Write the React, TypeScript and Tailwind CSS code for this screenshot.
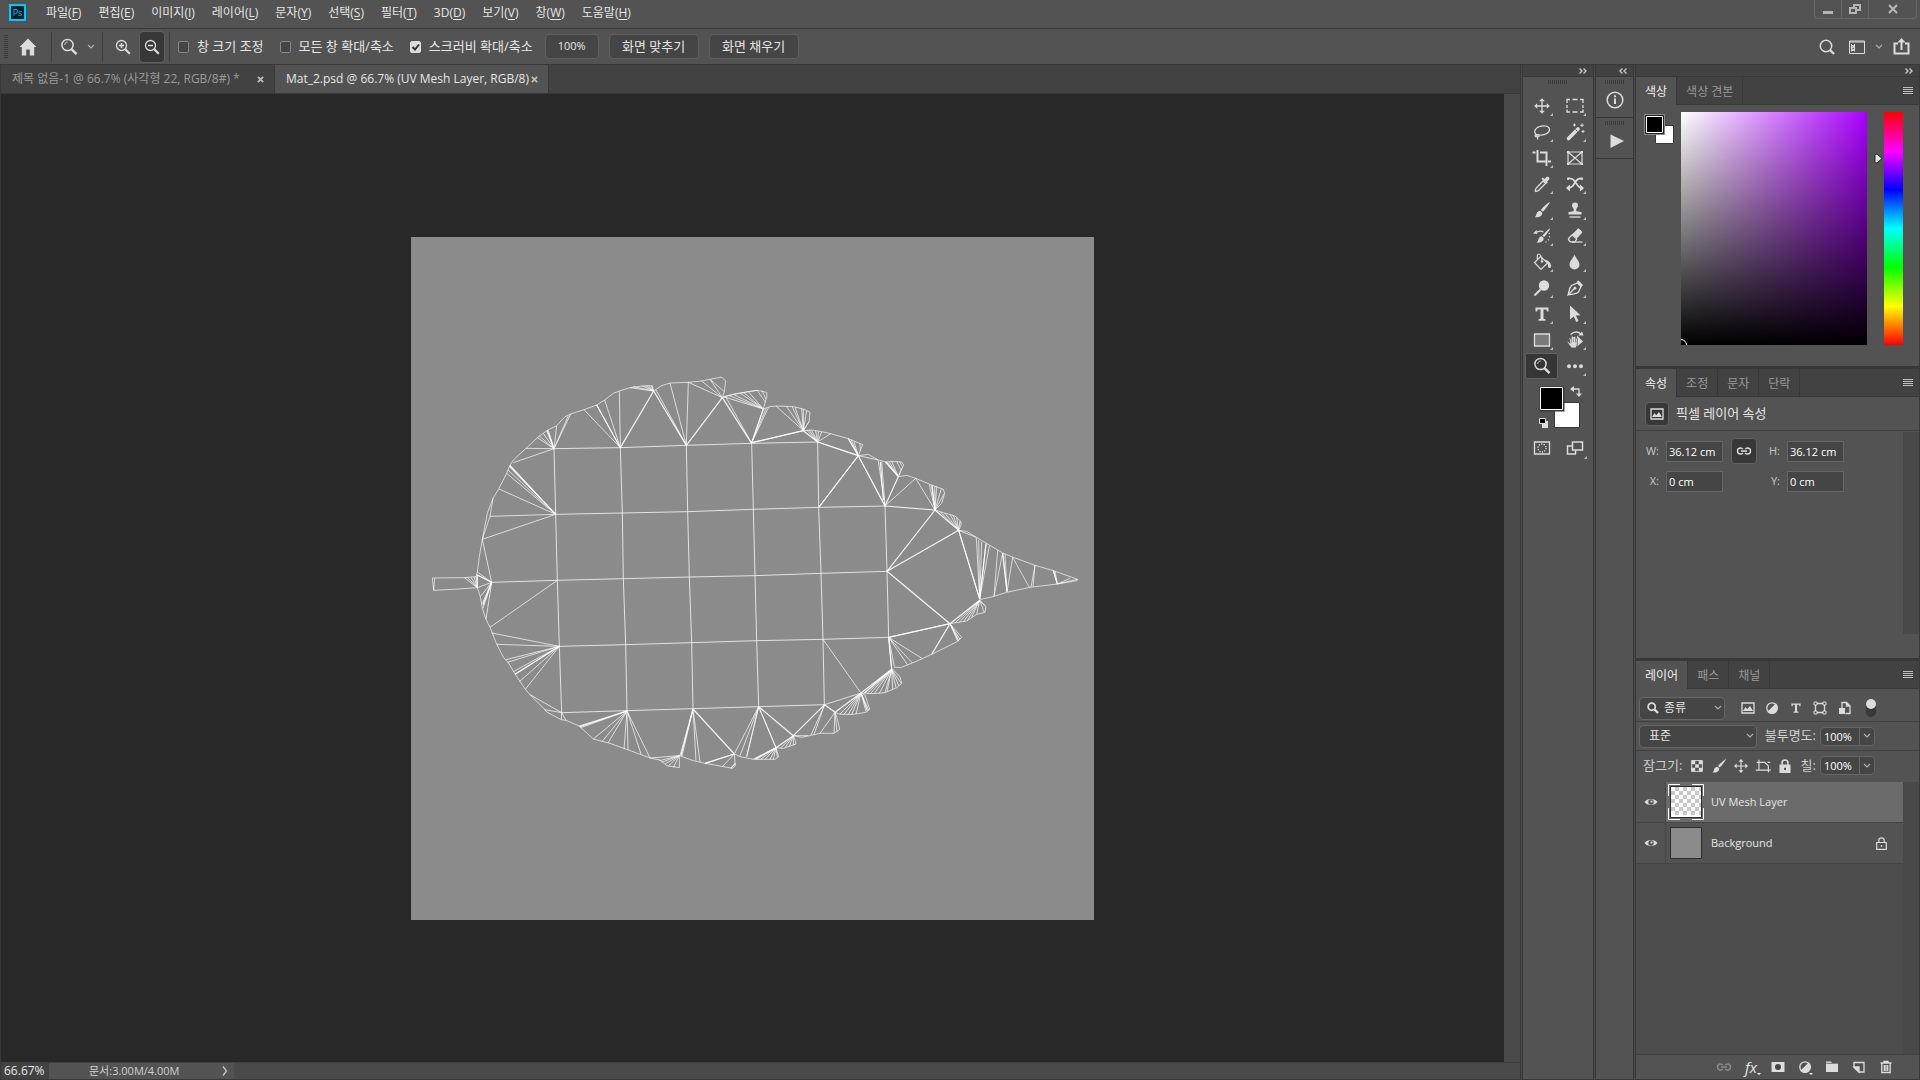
import { useState } from "react";
import type { ReactNode } from "react";
import clsx from "clsx";

type Point = [number, number];
type Fan = { hub: Point; to: Point[] };

const menus = [
  { label: "파일", key: "F" },
  { label: "편집", key: "E" },
  { label: "이미지", key: "I" },
  { label: "레이어", key: "L" },
  { label: "문자", key: "Y" },
  { label: "선택", key: "S" },
  { label: "필터", key: "T" },
  { label: "3D", key: "D" },
  { label: "보기", key: "V" },
  { label: "창", key: "W" },
  { label: "도움말", key: "H" },
];

/* ---------- Icons ---------- */

const Icon = ({ children, className = "w-5 h-5" }: { children: ReactNode; className?: string }) => (
  <svg viewBox="0 0 20 20" className={clsx("shrink-0", className)} fill="none" stroke="#dcdcdc" strokeWidth="1.3">
    {children}
  </svg>
);

const Chevron = () => (
  <svg viewBox="0 0 8 6" className="w-2 h-1.5 shrink-0" fill="none" stroke="#b0b0b0" strokeWidth="1.2">
    <path d="M1 1l3 3 3-3" />
  </svg>
);

const MoveIcon = ({ className }: { className?: string }) => (
  <Icon className={className}>
    <path d="M10 4v12M4 10h12" />
    <path d="M10 2.2l2.8 3H7.2zM10 17.8l2.8-3H7.2zM2.2 10l3-2.8v5.6zM17.8 10l-3-2.8v5.6z" fill="#dcdcdc" stroke="none" />
  </Icon>
);

const BrushIcon = ({ className }: { className?: string }) => (
  <Icon className={className}>
    <path d="M17.6 2.4c.5.5-4.600 7.200-6.800 9.400L8.900 9.900C11 7.400 17 1.900 17.600 2.400z" fill="#dcdcdc" stroke="none" />
    <path d="M8.200 10.700l2 2c.3 3-2.700 5-7.700 4.600 1.700-.9 1.500-2.200 2.200-4 .7-1.600 2-2.600 3.500-2.600z" fill="#dcdcdc" stroke="none" />
  </Icon>
);

const ZoomIcon = ({ className }: { className?: string }) => (
  <Icon className={className}>
    <circle cx="8.500" cy="8" r="5.600" strokeWidth="1.500" />
    <path d="M5.700 7.800c.2-1.700 1.300-2.700 3-2.800" strokeWidth="1" />
    <path d="M12.500 12.200l5 5" strokeWidth="2.400" />
  </Icon>
);

const HalfCircleIcon = () => (
  <Icon>
    <circle cx="10" cy="10" r="5.200" />
    <path d="M13.700 6.300A5.200 5.200 0 016.300 13.700z" fill="#dcdcdc" />
  </Icon>
);

const TypeIcon = ({ className }: { className?: string }) => (
  <Icon className={className}>
    <path d="M3.500 3.500h13v4h-1.600l-.5-2h-2.900v9.300l2 .5v1.400h-7v-1.400l2-.5V5.500H5.600l-.5 2H3.500z" fill="#dcdcdc" stroke="none" />
  </Icon>
);

const ImageIcon = ({ className }: { className?: string }) => (
  <Icon className={className}>
    <path d="M4 5h12v10H4z" />
    <path d="M5 13l2.500-4 1.700 2.200L12 8l3 5z" fill="#dcdcdc" stroke="none" />
  </Icon>
);

const LinkIcon = ({ dim }: { dim?: boolean }) => (
  <svg viewBox="0 0 16 10" className="w-4 h-2.5" fill="none" stroke={dim ? "#8a8a8a" : "#dcdcdc"} strokeWidth="1.400">
    <path d="M6.800 3.200C6 2 5.300 2 4.500 2a3 3 0 000 6c1 0 1.800-.3 2.300-1.200M9.200 3.200C10 2 10.700 2 11.500 2a3 3 0 010 6c-1 0-1.800-.3-2.300-1.200M5 5h6" />
  </svg>
);

const Grip = () => (
  <svg viewBox="0 0 20 4" className="w-5 h-1 shrink-0" stroke="#3c3c3c">
    <path d="M.5 0v4M2.500 0v4M4.500 0v4M6.500 0v4M8.500 0v4M10.500 0v4M12.500 0v4M14.500 0v4M16.500 0v4M18.500 0v4" />
  </svg>
);

const DoubleArrow = ({ left }: { left?: boolean }) => (
  <svg viewBox="0 0 8 6" className="w-2 h-1.5" fill="none" stroke="#c8c8c8" strokeWidth="1.400">
    <path d={left ? "M3.500.5L1 3l2.500 2.500M7.500.5L5 3l2.500 2.500" : "M.5.500L3 3 .5 5.500M4.500.500L7 3 4.500 5.500"} />
  </svg>
);

const tools: { name: string; icon: ReactNode; more?: boolean }[] = [
  { name: "이동 도구", more: true, icon: <MoveIcon /> },
  {
    name: "사각형 선택 윤곽 도구",
    more: true,
    icon: (
      <Icon>
        <path d="M2 7V3.500h3M7.500 3.500h5M15 3.500h3V7M18 9v3M18 13.500V16h-3M12.500 16h-5M5 16H2v-2.500M2 12V9" />
      </Icon>
    ),
  },
  {
    name: "올가미 도구",
    more: true,
    icon: (
      <Icon>
        <path d="M5.500 13.200C1 11 2.500 6.500 7 4.700c4.500-1.700 10-1 10.500 2.300.5 3.600-4.500 6.300-9.300 6-3-.1-5-.6-5.200.6-.1 1.600 3.500 2 4.200.5.500-1.300-1.700-2.300-2.200-.9-.4 1.300 1.200 2.300.5 4.300" strokeWidth="1.200" />
      </Icon>
    ),
  },
  {
    name: "자동 선택 도구",
    more: true,
    icon: (
      <Icon>
        <path d="M3.500 16.500L13 7" strokeWidth="3.600" strokeLinecap="round" />
        <path d="M10.500 7.500l2 2" stroke="#535353" strokeWidth="1" />
        <path d="M9.500 1.500v3M8 3h3M17 1.500v3.500M15.200 3.200h3.600M18 8v3M16.500 9.500h3" strokeWidth="1" />
      </Icon>
    ),
  },
  {
    name: "자르기 도구",
    more: true,
    icon: (
      <Icon>
        <path d="M.500 4.500h3M5.500 2v11.500h9M8 4.500h6.500V18M16 13.500h3" strokeWidth="2" />
      </Icon>
    ),
  },
  {
    name: "프레임 도구",
    icon: (
      <Icon>
        <path d="M3 4h14v12H3zM3 4l14 12M17 4L3 16" strokeWidth="1.200" />
        <path d="M2 3h2v2H2zM16 3h2v2h-2zM2 15h2v2H2zM16 15h2v2h-2z" fill="#dcdcdc" stroke="none" />
      </Icon>
    ),
  },
  {
    name: "스포이드 도구",
    more: true,
    icon: (
      <Icon>
        <path d="M11 7l2.500 2.500-7 7c-1 .8-2 .3-3 1-1-1 .2-2 .8-3.500z" />
        <path d="M12.500 5l2-2c1.500-1.200 3.900 1 2.600 2.600l-2 2 .8.900-1.400 1.300-5-5 1.400-1.300z" fill="#dcdcdc" stroke="none" />
      </Icon>
    ),
  },
  {
    name: "내용 인식 이동 도구",
    more: true,
    icon: (
      <Icon>
        <path d="M3 6V4.500c5-1 6 2 8 4.500 2 3 3 5.500 7 5.500M17 6V4.500c-4-.5-5.500 1.500-7 4-2 3.500-3 5.500-8 5.500" strokeWidth="1.800" />
        <path d="M1 14l4-3.500v7zM19 14l-4-3.500v7z" fill="#dcdcdc" stroke="none" />
      </Icon>
    ),
  },
  { name: "브러시 도구", more: true, icon: <BrushIcon /> },
  {
    name: "복제 도장 도구",
    more: true,
    icon: (
      <Icon>
        <path d="M8.700 9.500C8.700 8 7 7.500 7 5.500a3 3 0 116 0c0 2-1.700 2.500-1.700 4v1.700l5.200.8v2.500h-13V12l5.200-.8z" fill="#dcdcdc" stroke="none" />
        <path d="M4.500 17h11" />
      </Icon>
    ),
  },
  {
    name: "작업 내역 브러시 도구",
    more: true,
    icon: (
      <Icon>
        <path d="M18 2.500c.5.500-4 6.800-6 8.800l-1.700-1.700c2-2.200 7-7.600 7.700-7.100zM9.700 10.200l1.900 1.900c.3 3-2.300 5-7.100 4.600 1.500-.9 1.300-2.200 2-3.800.6-1.500 1.800-2.700 3.200-2.700zM1 7.500L4.500 4l.8 4z" fill="#dcdcdc" stroke="none" />
        <path d="M4 6.500c3-2 5-2 7.500-.5" />
        <path d="M17 7c1 2 .8 4.500-.5 6.500s-3 3-4.500 3.500" strokeDasharray="1.200 2" strokeWidth="1.200" />
      </Icon>
    ),
  },
  {
    name: "지우개 도구",
    more: true,
    icon: (
      <Icon>
        <path d="M3.500 12.500l3.800-3.800 4.400 4.400-2 2.900H6c-1.500-.5-2.500-1.800-2.500-3.500z" />
        <path d="M7 8.500l5.500-5.500c.6-.6 1.300-.5 2 0l2.200 2.200c.6.600.6 1.400 0 2l-5.200 5.600z" fill="#dcdcdc" stroke="none" />
        <path d="M7 16h10.500" />
      </Icon>
    ),
  },
  {
    name: "페인트 통 도구",
    more: true,
    icon: (
      <Icon>
        <path d="M8.500 4.500l7 6.500-6.500 6.500-6.500-7zM5.500 7.500c-.5-3-.2-5.500 1.200-5.500 1.800 0 2.800 3 3.300 6.500" strokeWidth="1.200" />
        <circle cx="10" cy="9.500" r="1.200" fill="#dcdcdc" stroke="none" />
        <path d="M12.500 7.500c3.500.5 6 2.500 6.500 6 0 2-.5 2.500-1.500 2.500s-1.500-1-1.500-2.300C15.700 11.500 14.500 9.500 12.500 7.500z" fill="#dcdcdc" stroke="none" />
      </Icon>
    ),
  },
  {
    name: "흐림 효과 도구",
    more: true,
    icon: (
      <Icon>
        <path d="M9.500 2.500c1 3.300 5 6.500 5 10a5 5 0 01-10 0c0-3.500 4-6.700 5-10z" fill="#dcdcdc" stroke="none" />
      </Icon>
    ),
  },
  {
    name: "닷지 도구",
    more: true,
    icon: (
      <Icon>
        <circle cx="12" cy="7.500" r="5.200" fill="#dcdcdc" stroke="none" />
        <path d="M8.500 11.500L2.500 17.500" strokeWidth="2" />
      </Icon>
    ),
  },
  {
    name: "펜 도구",
    more: true,
    icon: (
      <Icon>
        <path d="M3 17c1-3 1-7 3.500-9.500l6-2.500 3.500 3.500-2.500 5.500C11 16.500 6.500 16 3 17zM3 17l6.500-6.500" />
        <circle cx="10" cy="10.200" r="1.400" fill="#dcdcdc" stroke="none" />
        <path d="M11.500 4l2-1.500L18 7l-1.500 2z" fill="#dcdcdc" stroke="none" />
      </Icon>
    ),
  },
  { name: "수평 문자 도구", more: true, icon: <TypeIcon /> },
  {
    name: "패스 선택 도구",
    more: true,
    icon: (
      <Icon>
        <path d="M5 1.500l10.500 9.700-4.600.3 2.600 5.600-2.200 1-2.500-5.600L5 15.500z" fill="#dcdcdc" stroke="none" />
      </Icon>
    ),
  },
  {
    name: "사각형 도구",
    more: true,
    icon: (
      <Icon>
        <path d="M2.500 4h15v12h-15z" fill="#7a7a7a" />
      </Icon>
    ),
  },
  {
    name: "회전 보기 도구",
    more: true,
    icon: (
      <Icon>
        <path d="M5.500 4.500C9 1.500 13 1.500 16 4" />
        <path d="M18.500 5.500h-5l3.500-4z" fill="#dcdcdc" stroke="none" />
        <path d="M12 5.500l6 6-6 5z" fill="#dcdcdc" stroke="none" />
        <path d="M6.500 18c-1.500-2-3-3.700-4.500-6 .8-.8 2 0 3 1.200L4 8c.9-.6 1.500 0 2 1.200L6.500 6c.9-.4 1.600 0 1.800 1l.6 0c.3-.9 1.500-.9 1.800 0v1.500c1-.6 1.700 0 1.700.8-.2 3.500.3 6-1.400 8.700z" fill="#dcdcdc" stroke="#535353" strokeWidth=".8" />
        <path d="M6.400 9v3.500M8.500 8.500V12M10.600 9v3.500" stroke="#6b6b6b" strokeWidth=".7" />
      </Icon>
    ),
  },
  { name: "돋보기 도구", icon: <ZoomIcon /> },
  {
    name: "도구 모음 편집",
    more: true,
    icon: (
      <Icon>
        <path d="M4 8.200a2 2 0 100 4 2 2 0 000-4zM10 8.200a2 2 0 100 4 2 2 0 000-4zM16 8.200a2 2 0 100 4 2 2 0 000-4z" fill="#dcdcdc" stroke="none" />
      </Icon>
    ),
  },
];

/* ---------- UV mesh ---------- */

const gridRows: Point[][] = [
  [[462, 266], [661, 263], [859, 256], [1055, 250], [1253, 246]],
  [[467, 463], [667, 459], [863, 455], [1060, 448], [1256, 442], [1455, 438]],
  [[275, 667], [472, 661], [670, 656], [868, 651], [1065, 647], [1263, 640], [1461, 634]],
  [[478, 859], [677, 854], [875, 848], [1070, 842], [1269, 838], [1466, 832]],
  [[485, 1058], [681, 1052], [879, 1046], [1076, 1040], [1273, 1034]],
];

const gridColumns: Point[][] = [
  [[462, 266], [467, 463], [472, 661], [478, 859], [485, 1058]],
  [[661, 263], [667, 459], [670, 656], [677, 854], [681, 1052]],
  [[859, 256], [863, 455], [868, 651], [875, 848], [879, 1046]],
  [[1055, 250], [1060, 448], [1065, 647], [1070, 842], [1076, 1040]],
  [[1253, 246], [1256, 442], [1263, 640], [1269, 838], [1273, 1034]],
  [[1455, 438], [1461, 634], [1466, 832]],
];

type Quadrant = { shift: string; outline: string; fans: Fan[]; bold: string };

const quadrants: Quadrant[] = [
  {
    shift: "translate(0 0)",
    outline:
      "M232 683L160 688 101 691 97 654 193 653 228 650 232 636 238 590 247 538 262 460 279 415 297 385 320 340 330 315 340 300 378 265 412 233 442 211 470 197 495 170 512 162 552 149 590 135 614 120 640 100 658 93 690 83 727 78 757 77 761 93 785 77 810 69 865 67 905 63 930 58 965 51 977 63 973 95 967 113 1000 103 1045 95 1072 91M104 654L101 691M247 538L270 469 279 415M930 58L973 95",
    fans: [
      { hub: [462, 266], to: [[378, 265], [412, 233], [418, 228], [430, 220], [440, 212], [445, 211], [470, 198], [505, 167], [512, 162], [340, 308]] },
      { hub: [467, 463], to: [[330, 315], [328, 320], [324, 330], [320, 340], [297, 387], [270, 469], [247, 538]] },
      { hub: [661, 263], to: [[552, 149], [590, 135], [614, 120], [658, 93]] },
      { hub: [761, 93], to: [[690, 83], [700, 80], [727, 78], [737, 77], [745, 77], [753, 77]] },
      { hub: [859, 256], to: [[768, 90], [810, 69], [865, 67]] },
      { hub: [967, 113], to: [[865, 67], [905, 63], [930, 58]] },
      { hub: [1055, 250], to: [[977, 110], [1090, 147]] },
      { hub: [275, 667], to: [[247, 538], [232, 636], [232, 645], [232, 683], [241, 710], [247, 730], [249, 745], [258, 778]] },
      { hub: [232, 683], to: [[193, 653], [203, 653], [213, 652], [222, 651], [228, 648]] },
      { hub: [472, 661], to: [[270, 802]] },
    ],
    bold: "M661 263L761 93 859 256 967 113 1055 250M661 263L590 135M462 266L442 211M467 463L330 318M232 645V683M232 645L275 667 249 735",
  },
  {
    shift: "translate(1020 0)",
    outline:
      "M-50 110L-20 103 25 95 52 91 80 97 81 108 70 147 90 140 108 138 160 140 190 147 210 157 207 185 190 212 215 210 245 215 272 221 325 236 368 254 355 287 385 283 415 300 440 306 455 304 485 306 491 315 475 350 500 346 527 355 570 373 610 388 614 400 605 430 585 450 610 458 645 468 663 485 663 495 656 511 680 514 709 532 748 555 788 579 820 592 885 616 940 632 1013 658 1010 662 952 672 870 682 800 697 762 709 719 719M773 572L762 709 788 579 801 695 818 592 868 682M795 582L801 695M885 616L873 682M885 616L879 681M52 91L75 125M66 92L78 117M360 251L361 272M470 304L482 328M478 305L487 320",
    fans: [
      { hub: [70, 147], to: [[-50, 110], [-35, 106], [-20, 103], [0, 99], [10, 97], [25, 95]] },
      { hub: [190, 212], to: [[108, 138], [140, 140], [157, 141], [165, 142], [185, 146], [190, 147], [200, 152], [207, 185]] },
      { hub: [35, 248], to: [[85, 143], [78, 146], [190, 212]] },
      { hub: [233, 246], to: [[200, 210], [207, 210], [215, 211], [227, 213], [235, 214], [245, 216], [272, 221], [355, 287]] },
      { hub: [355, 287], to: [[325, 236], [333, 238], [342, 245], [415, 300], [238, 440], [435, 438]] },
      { hub: [435, 438], to: [[415, 303], [425, 305], [527, 355]] },
      { hub: [475, 350], to: [[435, 306], [441, 306], [448, 306], [455, 304], [485, 325]] },
      { hub: [585, 450], to: [[527, 355], [568, 373], [575, 375], [584, 378], [590, 380], [604, 386], [612, 402]] },
      { hub: [656, 511], to: [[600, 455], [615, 460], [630, 463], [640, 467], [650, 472], [660, 483], [709, 532]] },
      { hub: [719, 717], to: [[656, 511], [709, 534], [716, 540], [725, 545], [738, 550], [748, 557]] },
      { hub: [952, 672], to: [[940, 632], [945, 634], [990, 655], [1013, 658]] },
    ],
    bold: "M35 248L70 147M35 248L190 212 233 246 355 287 238 440M355 287L435 438 475 350M355 287L325 236M475 350L438 306M435 438L585 450 441 634 656 511 585 450M656 511L719 717M441 634L630 791M585 450L576 376M421 306L430 420M719 717L738 552M788 579L801 695M940 632L952 672",
  },
  {
    shift: "translate(0 600)",
    outline:
      "M232 83L241 110 247 145 258 178 270 202 289 250 310 292 325 308 344 340 376 388 390 404 433 447 440 456 484 479 498 481 537 498 545 505 580 537 630 550 680 568 750 594 780 600 800 617 838 623 838 587 880 602 915 610 998 625 1006 618 1003 582",
    fans: [
      { hub: [478, 259], to: [[275, 219], [289, 253], [318, 299], [322, 307], [340, 335], [345, 343], [358, 365], [376, 388]] },
      { hub: [485, 458], to: [[390, 404], [433, 449], [484, 479], [498, 481]] },
      { hub: [681, 453], to: [[537, 498], [542, 503], [580, 537], [606, 545], [624, 549], [672, 567], [684, 569], [723, 582], [750, 594]] },
      { hub: [838, 587], to: [[750, 594], [778, 602], [785, 607], [795, 612], [805, 618], [820, 622]] },
      { hub: [879, 447], to: [[840, 587], [846, 588], [888, 602], [900, 606]] },
      { hub: [1003, 582], to: [[915, 610], [967, 620]] },
      { hub: [1076, 440], to: [[1003, 582], [1020, 587], [1040, 592]] },
    ],
    bold: "M879 447L1003 582M879 447L843 587M681 453L540 500M478 259L345 343M1003 582L915 610M1006 610L992 625",
  },
  {
    shift: "translate(1020 600)",
    outline:
      "M630 191L680 183 710 163 735 157 738 140 719 121M463 322L485 322 517 309 547 296 575 283 653 244 665 232 640 203 630 191M363 399L400 401 435 398 470 383 485 370 480 350 455 325M285 457L300 463 340 463 378 457 389 448 375 405 363 399M160 527L185 532 213 526 240 520 282 520 299 508 293 480 285 457M108 563L130 565 168 552 165 540 160 527M-16 582L0 590 40 598 105 598 116 590 108 563",
    fans: [
      { hub: [719, 121], to: [[645, 189], [658, 187], [670, 185], [682, 182], [695, 172], [710, 163], [733, 157], [735, 137]] },
      { hub: [630, 191], to: [[653, 244], [660, 238], [446, 232]] },
      { hub: [446, 232], to: [[455, 325], [463, 320], [503, 315], [517, 309], [547, 296]] },
      { hub: [455, 328], to: [[372, 399], [382, 400], [392, 400], [403, 400], [418, 400], [435, 398], [441, 395], [458, 387], [468, 383], [477, 378], [484, 370]] },
      { hub: [363, 399], to: [[249, 238], [254, 434], [300, 462], [312, 463], [325, 463], [335, 463], [348, 462], [378, 455], [386, 450]] },
      { hub: [254, 434], to: [[213, 525], [222, 523]] },
      { hub: [285, 457], to: [[240, 520], [282, 520], [291, 515]] },
      { hub: [160, 527], to: [[122, 564], [135, 563], [148, 560], [160, 556], [204, 527]] },
      { hub: [108, 563], to: [[40, 597], [50, 598], [62, 598], [75, 598], [90, 598], [100, 598], [112, 592]] },
      { hub: [56, 440], to: [[20, 588]] },
    ],
    bold: "M446 232L630 191 719 121M630 191L575 283M630 191L656 242M446 232L455 328 363 399 285 457 254 434M254 434L160 527 108 563 56 440 160 527M363 399L382 452M108 563L45 597M455 328L375 398",
  },
];

const line = (points: Point[]) => "M" + points.map((p) => p.join(" ")).join("L");
const fanPath = ({ hub, to }: Fan) => to.map((p) => line([hub, p])).join("");

const UvMesh = () => (
  <svg viewBox="33 -369 2049 2049" className="w-[683px] h-[683px] bg-[#8b8b8b] shrink-0" fill="none" stroke="#fff" strokeLinejoin="round">
    <g strokeWidth="3" strokeOpacity=".75">
      {[...gridRows, ...gridColumns].map((points, i) => (
        <path key={i} d={line(points)} />
      ))}
    </g>
    {quadrants.map((q) => (
      <g key={q.shift} transform={q.shift}>
        <path d={q.outline} strokeWidth="3" strokeOpacity=".65" />
        <path d={q.fans.map(fanPath).join("")} strokeWidth="2.800" strokeOpacity=".75" />
        <path d={q.bold} strokeWidth="3.600" strokeOpacity=".9" />
      </g>
    ))}
  </svg>
);

/* ---------- Bars ---------- */

const MenuBar = () => (
  <header className="h-[29px] flex items-center bg-[#535353] border-b border-[#383838] pl-[9px] pr-[3px]">
    <div className="w-[17px] h-[17px] mb-1 border-2 border-[#00c8ff] bg-[#001d26] text-[#00c8ff] text-[9px] leading-none flex items-center justify-center">Ps</div>
    <nav className="flex items-center gap-[17px] ml-5 mb-0.5 flex-1">
      {menus.map((menu) => (
        <button key={menu.key} className="text-[12px] leading-4 whitespace-nowrap">
          {menu.label}(<span className="underline underline-offset-2">{menu.key}</span>)
        </button>
      ))}
    </nav>
    <div className="self-start h-[19px] flex border border-t-0 border-[#666] rounded-b-sm">
      <button aria-label="최소화" className="w-[27px] flex items-center justify-center border-r border-[#666]">
        <span className="w-2.5 h-[3px] mt-1.5 bg-[#b4b4b4]" />
      </button>
      <button aria-label="이전 크기로" className="w-[27px] flex items-center justify-center border-r border-[#666]">
        <svg viewBox="0 0 12 10" className="w-3 h-2.5" fill="none" stroke="#b4b4b4" strokeWidth="2">
          <path d="M5 3V1h6v5H8M1 4h6v5H1z" />
        </svg>
      </button>
      <button aria-label="닫기" className="w-[47px] flex items-center justify-center">
        <svg viewBox="0 0 10 10" className="w-2.5 h-2.5" stroke="#b4b4b4" strokeWidth="2.200">
          <path d="M1 1l8 8M9 1L1 9" />
        </svg>
      </button>
    </div>
  </header>
);

const Check = ({ label, checked }: { label: string; checked?: boolean }) => (
  <label className="relative flex items-center gap-2 whitespace-nowrap">
    <input
      type="checkbox"
      defaultChecked={checked}
      className="peer appearance-none w-[11px] h-[12px] rounded-xs border border-[#888] bg-[#454545] checked:bg-[#dcdcdc] checked:border-[#dcdcdc]"
    />
    <svg viewBox="0 0 11 12" className="absolute left-0 w-[11px] h-3 hidden peer-checked:block" fill="none" stroke="#333" strokeWidth="2">
      <path d="M2.500 6l2.500 2.500L9 3.500" />
    </svg>
    {label}
  </label>
);

const Divider = () => <div className="w-px h-[30px] bg-[#3e3e3e]" />;

const OptionsBar = () => (
  <div className="h-9 flex items-center bg-[#535353] border-b border-[#383838] pl-1 pr-2.5 text-[13px]">
    <svg viewBox="0 0 4 24" className="w-1 h-6" stroke="#3c3c3c">
      <path d="M2 0v24" strokeWidth="4" strokeDasharray="1 1" />
    </svg>
    <button aria-label="홈" className="ml-[11px] mr-3.5">
      <svg viewBox="0 0 18 18" className="w-[18px] h-[18px]" fill="#dcdcdc">
        <path d="M9 .500L17.500 9h-2.300v8.500h-4.400v-6H7.200v6H2.800V9H.500z" />
      </svg>
    </button>
    <Divider />
    <button aria-label="돋보기" className="flex items-center gap-2 px-[7px]">
      <ZoomIcon />
      <Chevron />
    </button>
    <Divider />
    <button aria-label="확대" className="w-9 h-8 flex items-center justify-center pl-1">
      <Icon>
        <circle cx="8.500" cy="8.500" r="5" />
        <path d="M12.300 12.300l4.500 4.500" strokeWidth="2.200" />
        <path d="M6 8.500h5M8.500 6v5" strokeWidth="1.500" />
      </Icon>
    </button>
    <button aria-label="축소" className="w-[26px] h-8 flex items-center justify-center bg-[#383838] border border-[#5e5e5e] rounded-sm">
      <Icon>
        <circle cx="8.500" cy="8.500" r="5" />
        <path d="M12.300 12.300l4.500 4.500" strokeWidth="2.200" />
        <path d="M6 8.500h5" strokeWidth="1.500" />
      </Icon>
    </button>
    <div className="ml-1">
      <Divider />
    </div>
    <div className="flex items-center gap-4 ml-2">
      <Check label="창 크기 조정" />
      <Check label="모든 창 확대/축소" />
      <Check label="스크러비 확대/축소" checked />
    </div>
    <div className="flex items-center gap-2.5 ml-3">
      <button className="w-[54px] h-[25px] bg-[#454545] border border-[#606060] rounded-sm text-[11px]">100%</button>
      <button className="w-[90px] h-[25px] bg-[#454545] border border-[#606060] rounded-sm">화면 맞추기</button>
      <button className="w-[90px] h-[25px] bg-[#454545] border border-[#606060] rounded-sm">화면 채우기</button>
    </div>
    <div className="flex items-center ml-auto">
      <button aria-label="검색">
        <Icon className="w-5 h-5">
          <circle cx="9" cy="9" r="5.700" strokeWidth="1.500" />
          <path d="M13 13l4 4" strokeWidth="2.400" />
        </Icon>
      </button>
      <button aria-label="작업 영역" className="flex items-center gap-2.5 ml-3 mr-2.5">
        <svg viewBox="0 0 16 14" className="w-4 h-3.5" fill="none" stroke="#dcdcdc">
          <path d="M.5 1h15M.5 1v12.500h15V1M.5 2h15M3 5.500h1.500v2H3zM3 9h1.500v1.500H3zM2.500 4v7.500M5.500 4v7.500" />
        </svg>
        <Chevron />
      </button>
      <button aria-label="공유">
        <svg viewBox="0 0 17 17" className="w-[17px] h-[17px]" fill="none" stroke="#dcdcdc" strokeWidth="2">
          <path d="M5 5.500H1.500v10h14v-10H12M8.500 12V3" />
          <path d="M8.500 0l4 4.500h-8z" fill="#dcdcdc" stroke="none" />
        </svg>
      </button>
    </div>
  </div>
);

const CloseMark = () => (
  <svg viewBox="0 0 8 8" className="w-[7px] h-[7px]" stroke="#bdbdbd" strokeWidth="2">
    <path d="M1 1l6 6M7 1L1 7" />
  </svg>
);

const DocumentTabs = () => (
  <div className="h-[29px] flex bg-[#424242] border-b border-[#383838] text-[12px]">
    <div className="w-[274px] flex items-center justify-between pl-[11px] pr-2.5 border-r border-[#383838] text-[#9b9b9b]">
      <button className="whitespace-nowrap">제목 없음-1 @ 66.7% (사각형 22, RGB/8#) *</button>
      <button aria-label="탭 닫기"><CloseMark /></button>
    </div>
    <div className="w-[274px] flex items-center justify-between pl-[11px] pr-2.5 border-r border-[#383838] bg-[#535353]">
      <button className="whitespace-nowrap">Mat_2.psd @ 66.7% (UV Mesh Layer, RGB/8)</button>
      <button aria-label="탭 닫기"><CloseMark /></button>
    </div>
  </div>
);

const StatusBar = () => (
  <footer className="h-[17px] flex items-stretch bg-[#4a4a4a] border-t border-[#404040] text-[11px] leading-4">
    <div className="w-12 pl-[3px] bg-[#424242] text-[12px] leading-4">66.67%</div>
    <button className="w-[185px] flex items-center justify-between pl-10 pr-1.5 bg-[#535353] text-[#d0d0d0]">
      문서:3.00M/4.00M
      <svg viewBox="0 0 6 10" className="w-1.5 h-2.5" fill="none" stroke="#c8c8c8" strokeWidth="1.300">
        <path d="M1 .500l3.500 4.500L1 9.500" />
      </svg>
    </button>
  </footer>
);

/* ---------- Docks ---------- */

const ToolsPanel = () => {
  const [active, setActive] = useState("돋보기 도구");

  return (
    <aside className="w-[71px] shrink-0 flex flex-col border-r border-[#383838] bg-[#535353]">
      <div className="h-3 shrink-0 flex items-center justify-end pr-1.5 bg-[#424242] border-b border-[#383838]"><DoubleArrow /></div>
      <div className="flex justify-center pt-[3px] pb-[9px]"><Grip /></div>
      <div className="grid grid-cols-2 px-0.5">
        {tools.map((tool) => (
          <button
            key={tool.name}
            aria-label={tool.name}
            onClick={() => setActive(tool.name)}
            className={clsx(
              "relative h-[26px] flex items-center justify-center border rounded-xs",
              active === tool.name ? "bg-[#363636] border-[#626262]" : "border-transparent"
            )}
          >
            {tool.icon}
            {tool.more && (
              <svg viewBox="0 0 3 3" className="absolute right-1 bottom-0.5 w-[3px] h-[3px]" fill="#bdbdbd">
                <path d="M3 0v3H0z" />
              </svg>
            )}
          </button>
        ))}
      </div>
      <svg viewBox="0 0 44 43" className="w-11 h-[43px] ml-[15px] mt-[6px]">
        <path d="M16.500 17.500h25v25h-25z" fill="#fff" stroke="#383838" />
        <path d="M1.500 1.500h25v25h-25z" fill="#383838" />
        <path d="M2.500 2.500h22v22h-22z" fill="#000" stroke="#fff" />
        <path d="M4 36h6v7H4z" fill="#dcdcdc" />
        <path d="M1.500 33.500h6v5h-6z" fill="#000" stroke="#dcdcdc" />
        <path d="M34 4h7v6" fill="none" stroke="#dcdcdc" strokeWidth="1.300" />
        <path d="M32 4l4-3v6zM41 12l-3-3.500h6z" fill="#dcdcdc" />
      </svg>
      <div className="grid grid-cols-2 px-0.5 mt-[7px]">
        <button aria-label="빠른 마스크" className="h-[26px] flex items-center justify-center">
          <Icon>
            <path d="M2.500 4h15v12h-15z" />
            <circle cx="10" cy="10" r="4" strokeDasharray="1.200 1.300" />
          </Icon>
        </button>
        <button aria-label="화면 모드" className="relative h-[26px] flex items-center justify-center">
          <Icon>
            <path d="M7.500 4h10v8h-10zM7.500 8h-5v8h8v-4" strokeWidth="1.500" />
          </Icon>
          <svg viewBox="0 0 3 3" className="absolute right-1 bottom-0.5 w-[3px] h-[3px]" fill="#bdbdbd">
            <path d="M3 0v3H0z" />
          </svg>
        </button>
      </div>
    </aside>
  );
};

const IconDock = () => (
  <aside className="w-[39px] shrink-0 flex flex-col border-x border-[#383838] bg-[#535353]">
    <div className="h-3 shrink-0 flex items-center justify-end pr-1.5 bg-[#424242] border-b border-[#383838]"><DoubleArrow left /></div>
    <div className="h-[41px] flex flex-col items-center pt-[3px] border-b border-[#383838]">
      <Grip />
      <button aria-label="정보" className="mt-1.5">
        <Icon>
          <circle cx="10" cy="10" r="7.800" strokeWidth="1.500" />
          <path d="M10 8.500V14M10 5.300v2" strokeWidth="2" />
        </Icon>
      </button>
    </div>
    <div className="h-[41px] flex flex-col items-center pt-[3px] border-b border-[#383838]">
      <Grip />
      <button aria-label="액션" className="mt-1.5">
        <Icon>
          <path d="M5.500 3.500L19 10 5.500 17z" fill="#dcdcdc" stroke="none" />
        </Icon>
      </button>
    </div>
  </aside>
);

const PanelTabs = ({ tabs }: { tabs: string[] }) => (
  <div className="h-7 shrink-0 flex bg-[#424242] text-[12px]">
    {tabs.map((tab, i) => (
      <button
        key={tab}
        className={clsx(
          "px-[9px] pt-0.5 border-r border-[#383838] whitespace-nowrap",
          i === 0 ? "bg-[#535353] text-[#eee]" : "border-b text-[#999]"
        )}
      >
        {tab}
      </button>
    ))}
    <div className="flex-1 flex items-center justify-end pr-1.5 border-b border-[#383838]">
      <button aria-label="패널 메뉴">
        <svg viewBox="0 0 10 7" className="w-2.5 h-[7px]" stroke="#bdbdbd">
          <path d="M0 .5h10M0 2.500h10M0 4.500h10M0 6.500h10" />
        </svg>
      </button>
    </div>
  </div>
);

const ColorPanel = () => (
  <section className="bg-[#535353] border-b border-[#383838]">
    <PanelTabs tabs={["색상", "색상 견본"]} />
    <div className="flex pt-[7px] pb-[21px] pl-2 pr-4">
      <svg viewBox="0 0 31 31" className="w-[31px] h-[31px] mt-[2px]">
        <path d="M11.500 11.500h18v18h-18z" fill="#fff" stroke="#383838" />
        <path d="M.5.500h20v20H.5z" fill="#222" stroke="#8a8a8a" />
        <path d="M2.500 2.500h16v16h-16z" fill="#000" stroke="#fff" />
      </svg>
      <div className="relative flex-1 h-[233px] ml-[6px] bg-[linear-gradient(to_top,#000,transparent),linear-gradient(to_right,#fff,#aa00ff)] overflow-hidden">
        <div className="absolute -left-1.5 -bottom-1.5 w-3 h-3 rounded-full border border-white" />
      </div>
      <div className="w-[17px] pt-[41px] pl-[7px]">
        <svg viewBox="0 0 9 11" className="w-[9px] h-[11px]">
          <path d="M1 2.500Q1 1 3 1L8 5.500 3 10Q1 10 1 8.500z" fill="#e6e6e6" stroke="#222" />
        </svg>
      </div>
      <div className="w-[19px] h-[233px] bg-[linear-gradient(to_bottom,#f00,#f0f,#00f,#0ff,#0f0,#ff0,#f00)]" />
    </div>
  </section>
);

const Field = ({ label, value }: { label: string; value: string }) => (
  <label className="flex items-center gap-[7px] text-[#c8c8c8]">
    <span className="w-[15px] text-right">{label}</span>
    <input defaultValue={value} className="w-[57px] h-[21px] px-0.5 bg-[#454545] border border-[#666] text-white" />
  </label>
);

const PropertiesPanel = () => (
  <section className="bg-[#535353] border-b border-[#383838] text-[11px]">
    <PanelTabs tabs={["속성", "조정", "문자", "단락"]} />
    <div className="h-[34px] flex items-center gap-[7px] pl-[9px] border-b border-[#404040] text-[13px]">
      <div className="w-6 h-6 flex items-center justify-center bg-[#383838] border border-[#626262] rounded-sm">
        <ImageIcon className="w-5 h-5" />
      </div>
      픽셀 레이어 속성
    </div>
    <div className="flex justify-between pb-[24px]">
      <div className="pl-2 pt-[7px] grid grid-cols-[auto_auto_auto] gap-x-2 gap-y-[7px] content-start items-center">
        <Field label="W:" value="36.12 cm" />
        <button aria-label="비율 고정" className="w-[26px] h-[26px] flex items-center justify-center bg-[#383838] border border-[#626262] rounded-sm">
          <LinkIcon />
        </button>
        <Field label="H:" value="36.12 cm" />
        <Field label="X:" value="0 cm" />
        <span />
        <Field label="Y:" value="0 cm" />
      </div>
      <div className="w-4 h-[202px] mt-px bg-[#494949]" />
    </div>
  </section>
);

const Percent = ({ label }: { label: string }) => (
  <div className="flex items-center gap-1 ml-auto whitespace-nowrap">
    <label className="flex items-center gap-1 text-[13px] text-[#d0d0d0]">
      {label}
      <input defaultValue="100%" className="w-10 h-[19px] px-[3px] bg-[#454545] border border-[#666] rounded-l-sm text-[11px] text-white" />
    </label>
    <button aria-label={label} className="w-4 h-[19px] -ml-[5px] flex items-center justify-center bg-[#454545] border border-[#666] rounded-r-sm">
      <Chevron />
    </button>
  </div>
);

const LayerRow = ({ name, selected, locked }: { name: string; selected?: boolean; locked?: boolean }) => (
  <li className="h-[41px] flex bg-[#535353] border-b border-[#454545]">
    <button aria-label={name + " 표시"} className="w-[30px] flex items-center justify-center border-r border-[#454545]">
      <svg viewBox="0 0 14 10" className="w-3.5 h-2.5">
        <path d="M.500 5C3 1 11 1 13.500 5 11 9 3 9 .500 5z" fill="#dcdcdc" />
        <circle cx="7" cy="5" r="2.700" fill="#535353" />
        <circle cx="7.500" cy="4.500" r="1.100" fill="#dcdcdc" />
      </svg>
    </button>
    <button className={clsx("flex-1 flex items-center pl-0.5 pr-4 text-left", selected && "bg-[#6b6b6b]")}>
      <svg viewBox="0 0 36 36" className="w-9 h-9 mr-[7px] shrink-0">
        {selected && (
          <>
            <path d="M3 3h31v31H3z" fill="#2c2c2c" />
            <path d="M.5 12V.5H12M24 .5h11.500V12M35.500 24v11.500H24M12 35.500H.5V24" fill="none" stroke="#fff" />
          </>
        )}
        <path d="M2.500 2.500h31v31h-31z" fill={selected ? "#fff" : "#8b8b8b"} stroke="#2c2c2c" />
        {selected &&
          [0, 1, 2, 3, 4, 5, 6].map((row) => (
            <path key={row} d={`M3 ${5 + row * 4}h30`} stroke="#c9c9c9" strokeWidth="4" strokeDasharray="4 4" strokeDashoffset={row % 2 ? 0 : 4} />
          ))}
      </svg>
      <span className="flex-1">{name}</span>
      {locked && (
        <svg viewBox="0 0 11 13" className="w-[11px] h-[13px]" fill="none" stroke="#dcdcdc" strokeWidth="1.200">
          <path d="M.7 5.500h9.600v6.800H.7zM2.800 5.500V3.500a2.700 2.700 0 015.400 0v2M5.500 8v2" />
        </svg>
      )}
    </button>
  </li>
);

const LayersPanel = () => (
  <section className="flex-1 min-h-0 flex flex-col bg-[#535353] text-[11px]">
    <PanelTabs tabs={["레이어", "패스", "채널"]} />
    <div className="h-[33px] shrink-0 flex items-center pt-1.5 pl-[3px] border-b border-[#404040]">
      <div className="relative flex items-center">
        <svg viewBox="0 0 12 12" className="absolute left-2 w-3 h-3" fill="none" stroke="#dcdcdc">
          <circle cx="4.700" cy="4.700" r="3.600" strokeWidth="1.700" />
          <path d="M7.500 7.500l3.500 3.500" strokeWidth="2.400" />
        </svg>
        <select aria-label="필터 유형" className="appearance-none w-[86px] h-[23px] pl-6 bg-[#454545] border border-[#666] rounded-sm text-[12px]">
          <option>종류</option>
        </select>
        <div className="absolute right-[3px]"><Chevron /></div>
      </div>
      <div className="flex items-center gap-1 ml-[13px]">
        <ImageIcon />
        <HalfCircleIcon />
        <TypeIcon className="w-5 h-3.5" />
        <Icon>
          <path d="M5.500 5.500h9v9h-9z" />
          <path d="M4 4h3v3H4zM13 4h3v3h-3zM4 13h3v3H4zM13 13h3v3h-3z" fill="#535353" strokeWidth="1" />
        </Icon>
        <Icon>
          <path d="M8 10V4.500h4.500L16 8v7.500h-4.500M12.500 4.500V8H16" />
          <path d="M5 10h6v6H5z" fill="#dcdcdc" stroke="none" />
        </Icon>
      </div>
      <button aria-label="필터 켜기" className="w-2.5 h-[18px] ml-3 flex items-start rounded-full bg-[#383838]">
        <span className="block w-2.5 h-2.5 rounded-full bg-[#dcdcdc]" />
      </button>
    </div>
    <div className="h-[29px] shrink-0 flex items-center pl-[3px] pr-[44px] border-b border-[#404040]">
      <div className="relative flex items-center">
        <select aria-label="혼합 모드" className="appearance-none w-[118px] h-[23px] pl-[9px] bg-[#454545] border border-[#666] rounded-sm text-[12px]">
          <option>표준</option>
        </select>
        <div className="absolute right-[3px]"><Chevron /></div>
      </div>
      <Percent label="불투명도:" />
    </div>
    <div className="h-[31px] shrink-0 flex items-center pb-0.5 pl-[7px] pr-[44px]">
      <span className="text-[13px] text-[#d0d0d0] w-[45px] whitespace-nowrap">잠그기:</span>
      <div className="flex items-center gap-1">
        <button aria-label="투명 픽셀 잠그기">
          <Icon className="w-[18px] h-[18px]">
            <path d="M4 4h12v12H4z" strokeWidth="1" />
            <path d="M4 4h4v4H4zM12 4h4v4h-4zM8 8h4v4H8zM4 12h4v4H4zM12 12h4v4h-4z" fill="#dcdcdc" stroke="none" />
          </Icon>
        </button>
        <button aria-label="이미지 픽셀 잠그기"><BrushIcon className="w-[18px] h-[18px]" /></button>
        <button aria-label="위치 잠그기"><MoveIcon className="w-[18px] h-[18px]" /></button>
        <button aria-label="대지 잠그기">
          <Icon className="w-[18px] h-[18px]">
            <path d="M3 6h9l4 4v7M5.500 3v11.500h13M2 14.500h3M15 6h3" />
          </Icon>
        </button>
        <button aria-label="모두 잠그기">
          <Icon className="w-[18px] h-[18px]">
            <path d="M4.500 9h11v8h-11z" fill="#dcdcdc" />
            <path d="M6.800 9V6.500a3.200 3.200 0 016.400 0V9" strokeWidth="1.800" />
            <path d="M10 12v2.500" stroke="#454545" strokeWidth="2" />
          </Icon>
        </button>
      </div>
      <Percent label="칠:" />
    </div>
    <div className="flex-1 min-h-0 flex bg-[#4d4d4d]">
      <ul className="flex-1">
        <LayerRow name="UV Mesh Layer" selected />
        <LayerRow name="Background" locked />
      </ul>
      <div className="w-4 bg-[#494949]" />
    </div>
    <div className="h-[25px] shrink-0 flex items-center justify-end gap-[7px] pr-[23px] border-t border-[#404040] bg-[#535353]">
      <button aria-label="레이어 연결" className="w-5 flex justify-center"><LinkIcon dim /></button>
      <button aria-label="레이어 스타일" className="relative w-5 text-[15px] leading-4 italic">
        fx
        <svg viewBox="0 0 4 2" className="absolute right-0 bottom-0 w-1 h-0.5" fill="#fff"><path d="M0 0h4L2 2z" /></svg>
      </button>
      <button aria-label="레이어 마스크">
        <Icon>
          <path d="M3.500 5h13v10h-13z" fill="#dcdcdc" stroke="none" />
          <circle cx="10" cy="10" r="3" fill="#454545" stroke="none" />
        </Icon>
      </button>
      <button aria-label="조정 레이어" className="relative">
        <HalfCircleIcon />
        <svg viewBox="0 0 4 2" className="absolute right-0.5 bottom-0.5 w-1 h-0.5" fill="#fff"><path d="M0 0h4L2 2z" /></svg>
      </button>
      <button aria-label="새 그룹">
        <Icon>
          <path d="M4 4.500h5l1 1.500h6v9H4z" fill="#dcdcdc" stroke="none" />
          <path d="M4 6.300h12" stroke="#535353" strokeWidth=".8" />
        </Icon>
      </button>
      <button aria-label="새 레이어">
        <Icon>
          <path d="M5 10V5.500h10V15h-5L5 10.500z" />
          <path d="M5 10h5v5z" fill="#dcdcdc" />
        </Icon>
      </button>
      <button aria-label="삭제">
        <Icon>
          <path d="M4.500 6h11M8 5.500V4.500h4v1M5.800 6.500v9h8.400v-9M8.300 8v6M10 8v6M11.700 8v6" />
        </Icon>
      </button>
    </div>
  </section>
);

const App = () => {
  return (
    <div className="h-screen flex flex-col bg-[#383838] text-[#e6e6e6] overflow-hidden font-['Open_Sans','Noto_Sans_CJK_KR',sans-serif]">
      <MenuBar />
      <OptionsBar />
      <div className="flex-1 min-h-0 flex pl-px pb-px">
        <main className="flex-1 min-w-0 flex flex-col">
          <DocumentTabs />
          <div className="flex-1 min-h-0 flex">
            <div className="flex-1 flex items-center justify-center bg-[#282828] overflow-hidden">
              <UvMesh />
            </div>
            <div className="w-4 bg-[#4a4a4a]" />
          </div>
          <StatusBar />
        </main>
        <div className="w-px mx-px bg-[#4a4a4a]" />
        <ToolsPanel />
        <div className="w-px bg-[#4a4a4a]" />
        <IconDock />
        <div className="w-px mr-px bg-[#4a4a4a]" />
        <div className="w-[284px] shrink-0 flex flex-col gap-0.5 border-r border-[#383838]">
          <div>
            <div className="h-3 flex items-center justify-end pr-1.5 bg-[#424242] border-b border-[#383838]"><DoubleArrow /></div>
            <ColorPanel />
          </div>
          <PropertiesPanel />
          <LayersPanel />
        </div>
      </div>
    </div>
  );
};

export default App;
